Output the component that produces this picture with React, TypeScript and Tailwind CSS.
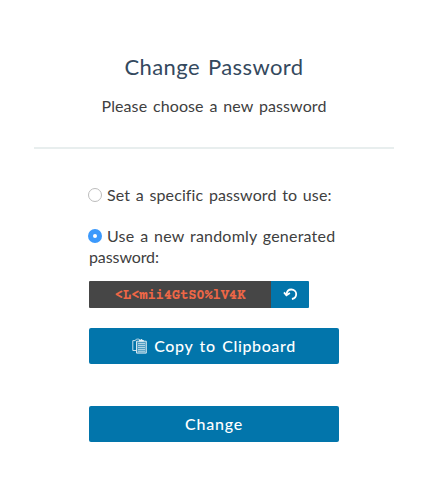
import React from "react";

function UndoIcon() {
  return (
    <svg width="15" height="13" viewBox="0 0 15 13" fill="none" className="block">
      <path d="M3.6 6.4C3.8 3.2 5.6 1.5 8.3 1.5c2.9 0 4.9 1.9 4.9 4.6 0 2.6-1.6 4.6-4.3 4.9" stroke="#fff" strokeWidth="1.8" />
      <path d="M1 4.4l2.4 2.9L6.9 5" stroke="#fff" strokeWidth="1.8" />
    </svg>
  );
}

function ClipboardIcon() {
  return (
    <svg width="15" height="16" viewBox="0 0 15 16" fill="none" className="block">
      <path d="M4 12.5H.8V2.6h2.6M3.2 2.2C4.2.8 7 .8 7.8 1.7" stroke="#c5dfec" strokeWidth="1" />
      <path d="M4.5 3.2h9.8v11.9H4.5z" fill="#4f9dc3" stroke="#d5e8f1" strokeWidth="1" />
      <path d="M7 3.6V2h1.3c.2-1.5 2-1.5 2.2 0h1.3v1.6z" fill="#e5f1f7" />
      <path d="M6 5.5h7M6 7.5h7M6 9.5h7M6 11.5h7M6 13.3h7" stroke="#b9d9e8" strokeWidth=".9" />
    </svg>
  );
}

function Radio({ checked = false }: { checked?: boolean }) {
  return (
    <span
      className={
        checked
          ? "mt-[4px] mr-[5px] -ml-px inline-flex size-[14px] items-center justify-center rounded-full bg-[#3b99fc] align-top"
          : "mt-[4px] mr-[5px] -ml-px inline-flex size-[14px] rounded-full border border-[#bcbcbc] bg-white align-top"
      }
    >
      {checked && <span className="size-1 rounded-full bg-white" />}
    </span>
  );
}

export default function App() {
  return (
    <main className="h-[480px] w-[432px] bg-white font-[Lato,sans-serif] text-[16px] text-[#404040]">
      <header className="ml-[34px] flex h-[149px] w-[360px] flex-col items-center border-b-2 border-[#e8eeee] pt-[52px]">
        <h1 className="text-[22px] leading-[30px] tracking-[0.4px] whitespace-nowrap text-[#34495e] [word-spacing:2px]">Change Password</h1>
        <p className="mt-[13px] leading-[22px] tracking-[0.1px] whitespace-nowrap [word-spacing:1.6px]">Please choose a new password</p>
      </header>
      <form className="ml-[89px] w-[250px] pt-[35px]" onSubmit={(e) => e.preventDefault()}>
        <label className="block leading-[21px] tracking-[0.1px] whitespace-nowrap [word-spacing:1.5px]"><Radio />Set a specific password to use:</label>
        <label className="mt-5 block leading-[21px] tracking-[0.2px] [word-spacing:1.5px]">
          <span className="whitespace-nowrap"><Radio checked />Use a new randomly generated</span><br /><span className="tracking-[-0.1px]">password:</span>
        </label>
        <div className="mt-[14px] flex h-[27px] w-[220px]">
          <div className="flex w-[182px] items-center justify-center rounded-l-[1px] bg-[#464646] pt-[3px] font-['Courier_Prime','Liberation_Mono',monospace] text-[14px] font-bold tracking-[-0.25px] text-[#ee6746]">{"<L<mii4GtS0%lV4K"}</div>
          <button type="button" aria-label="Regenerate" className="flex flex-1 items-center justify-center rounded-r-[1px] bg-[#0275ab]"><UndoIcon /></button>
        </div>
        <button type="button" className="mt-5 flex h-9 w-full items-center justify-center gap-[7px] rounded-[2px] bg-[#0275ab] text-[16px] font-medium text-white">
          <ClipboardIcon /><span className="-mt-px tracking-[0.6px] whitespace-nowrap [word-spacing:2px]">Copy to Clipboard</span>
        </button>
        <button type="submit" className="mt-[42px] block h-9 w-full rounded-[2px] bg-[#0275ab] text-[16px] font-medium tracking-[0.8px] text-white">Change</button>
      </form>
    </main>
  );
}
